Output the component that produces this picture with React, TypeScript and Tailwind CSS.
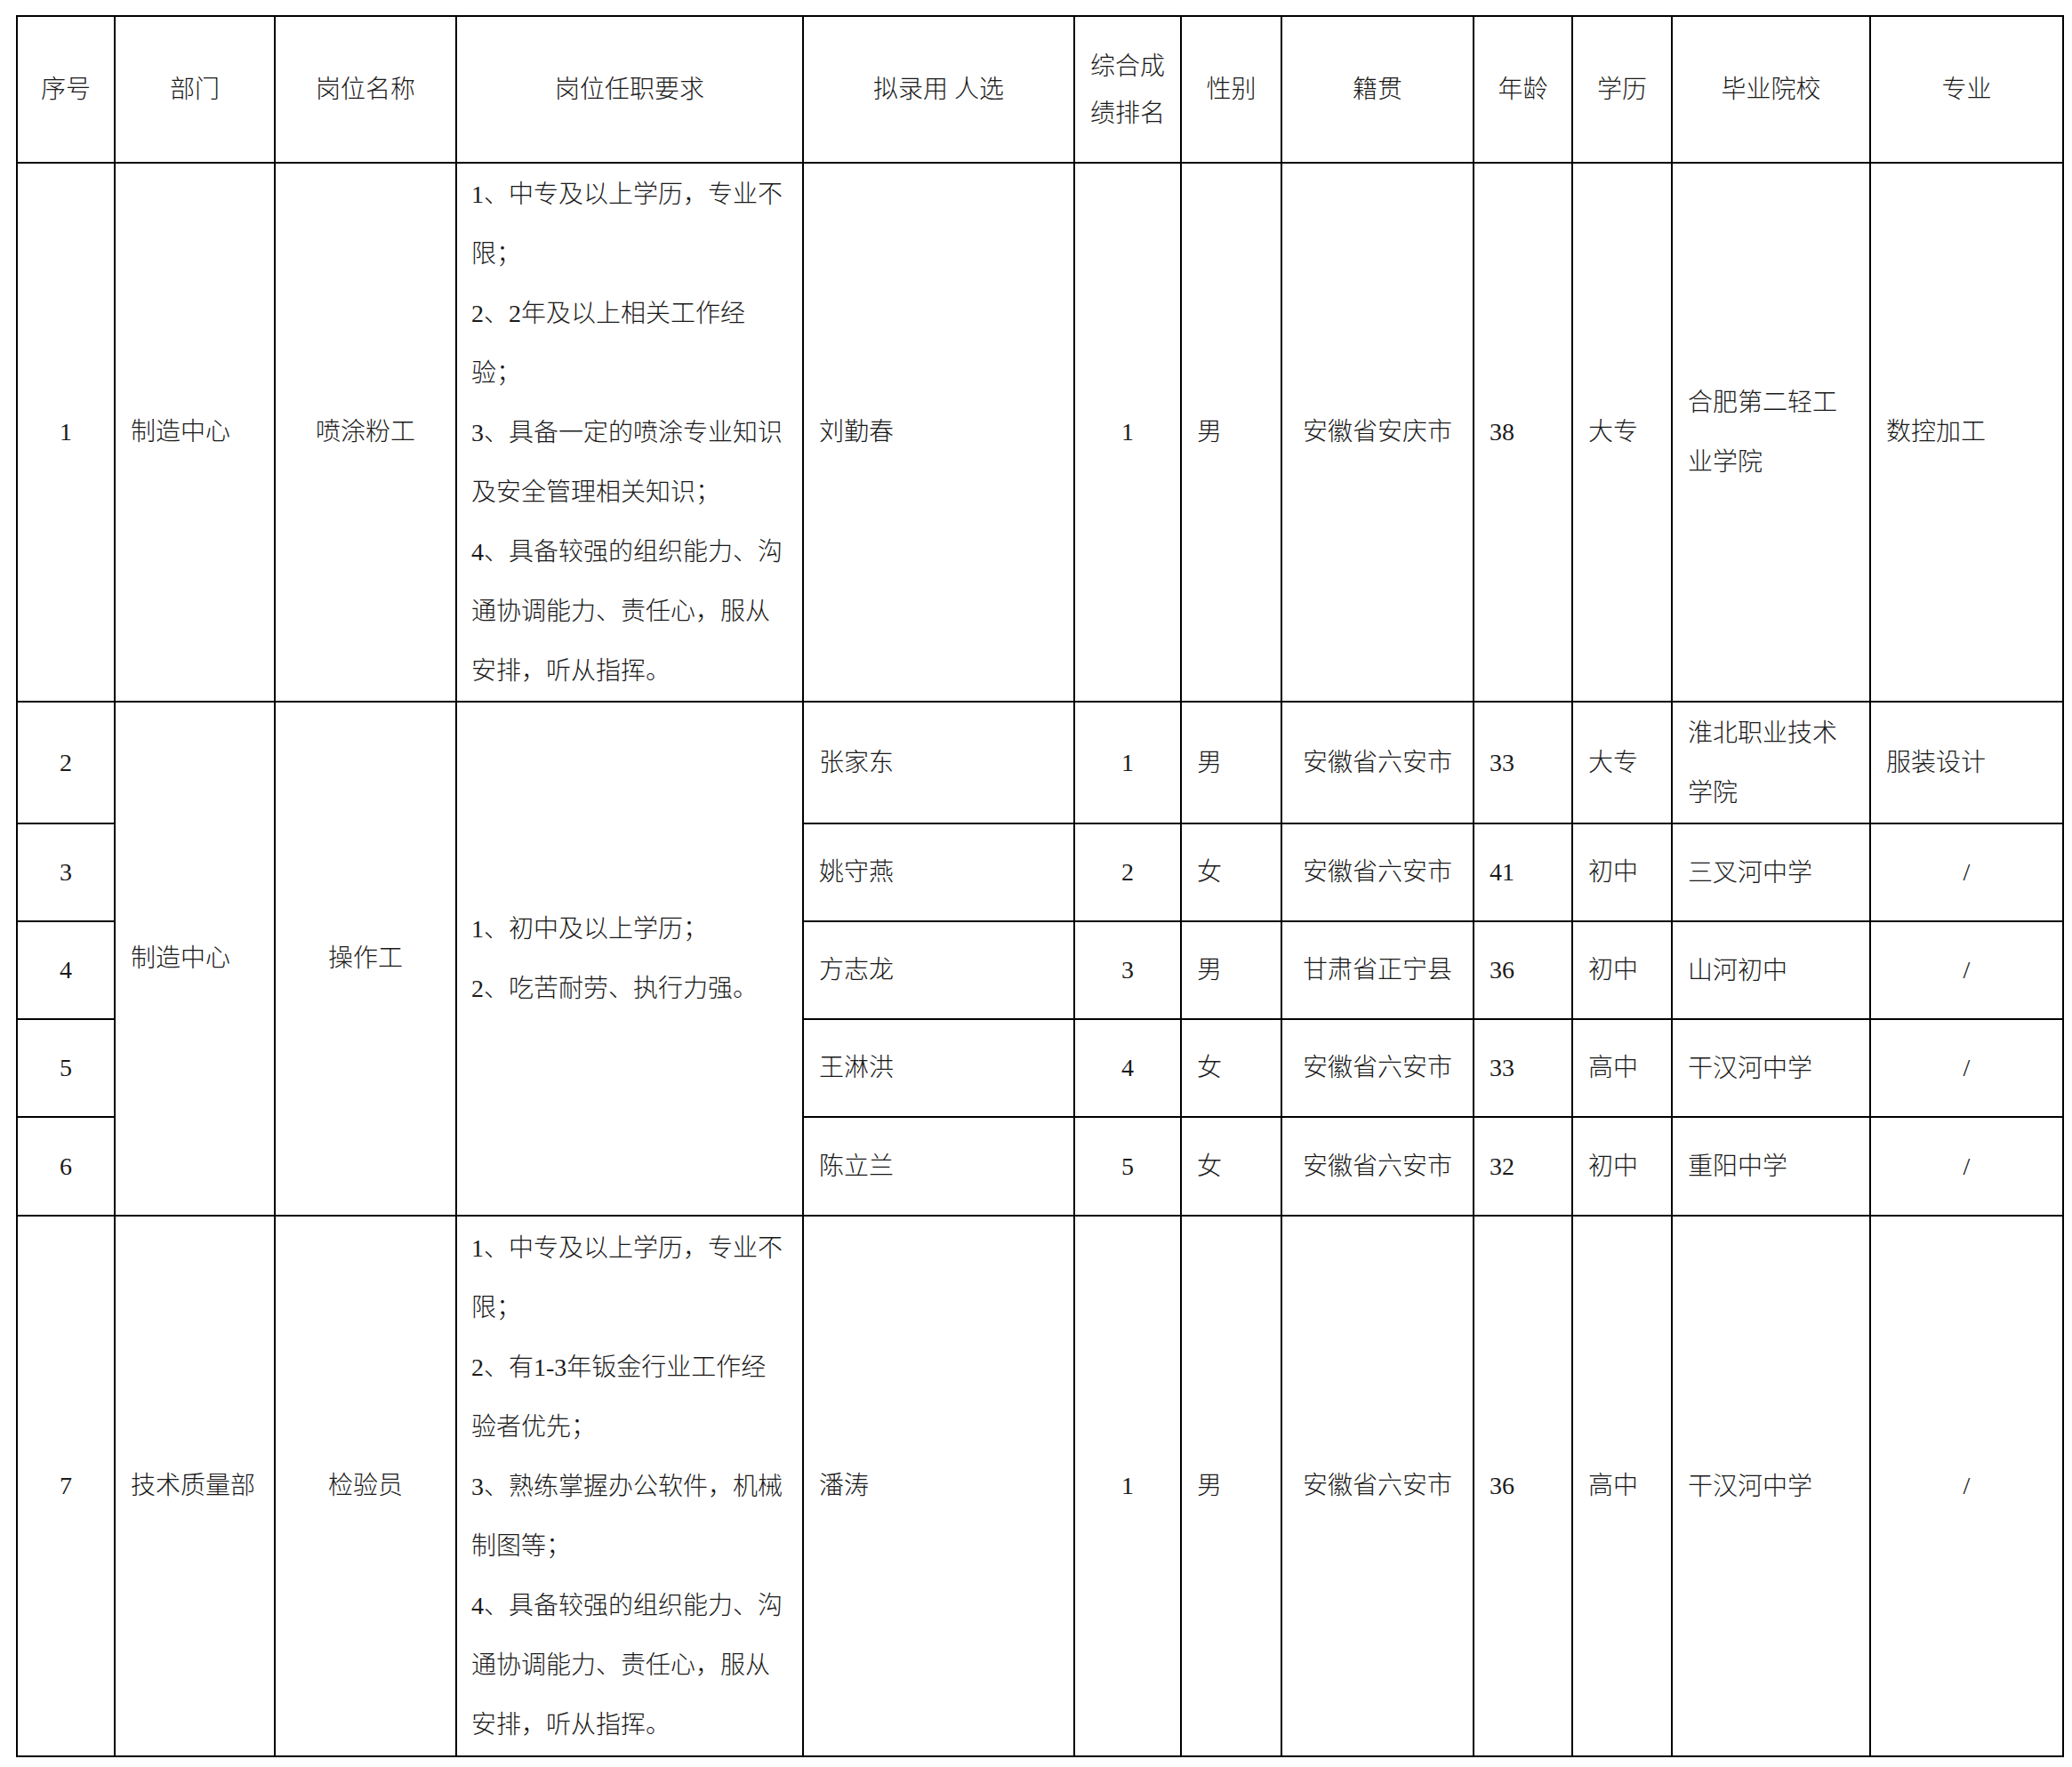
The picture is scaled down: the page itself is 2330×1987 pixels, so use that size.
import React from "react";

type Row = {
  no: string;
  name: string;
  rank: string;
  sex: string;
  origin: string;
  age: string;
  edu: string;
  school: string[];
  major: string;
  h: string;
};

const req1 = [
  "1、中专及以上学历，专业不",
  "限；",
  "2、2年及以上相关工作经",
  "验；",
  "3、具备一定的喷涂专业知识",
  "及安全管理相关知识；",
  "4、具备较强的组织能力、沟",
  "通协调能力、责任心，服从",
  "安排，听从指挥。",
];

const req2 = ["1、初中及以上学历；", "2、吃苦耐劳、执行力强。"];

const req7 = [
  "1、中专及以上学历，专业不",
  "限；",
  "2、有1-3年钣金行业工作经",
  "验者优先；",
  "3、熟练掌握办公软件，机械",
  "制图等；",
  "4、具备较强的组织能力、沟",
  "通协调能力、责任心，服从",
  "安排，听从指挥。",
];

const td = "border-2 border-black align-middle p-0";
const L = `${td} text-left pl-[17px]`;
const C = `${td} text-center`;

function Lines({ lines }: { lines: string[] }) {
  return (
    <div className="leading-[67px] whitespace-nowrap">
      {lines.map((l, i) => (
        <div key={i}>{l}</div>
      ))}
    </div>
  );
}

function Major({ v }: { v: string }) {
  if (v === "/") return <td className={C}>/</td>;
  return <td className={L}>{v}</td>;
}

function Tail({ r }: { r: Row }) {
  return (
    <>
      <td className={L}>{r.name}</td>
      <td className={C}>{r.rank}</td>
      <td className={L}>{r.sex}</td>
      <td className={C}>{r.origin}</td>
      <td className={L}>{r.age}</td>
      <td className={L}>{r.edu}</td>
      <td className={L}>
        <Lines lines={r.school} />
      </td>
      <Major v={r.major} />
    </>
  );
}

export default function App() {
  const r1: Row = { no: "1", name: "刘勤春", rank: "1", sex: "男", origin: "安徽省安庆市", age: "38", edu: "大专", school: ["合肥第二轻工", "业学院"], major: "数控加工", h: "" };
  const group: Row[] = [
    { no: "2", name: "张家东", rank: "1", sex: "男", origin: "安徽省六安市", age: "33", edu: "大专", school: ["淮北职业技术", "学院"], major: "服装设计", h: "h-[137px]" },
    { no: "3", name: "姚守燕", rank: "2", sex: "女", origin: "安徽省六安市", age: "41", edu: "初中", school: ["三叉河中学"], major: "/", h: "h-[110px]" },
    { no: "4", name: "方志龙", rank: "3", sex: "男", origin: "甘肃省正宁县", age: "36", edu: "初中", school: ["山河初中"], major: "/", h: "h-[110px]" },
    { no: "5", name: "王淋洪", rank: "4", sex: "女", origin: "安徽省六安市", age: "33", edu: "高中", school: ["干汉河中学"], major: "/", h: "h-[110px]" },
    { no: "6", name: "陈立兰", rank: "5", sex: "女", origin: "安徽省六安市", age: "32", edu: "初中", school: ["重阳中学"], major: "/", h: "h-[111px]" },
  ];
  const r7: Row = { no: "7", name: "潘涛", rank: "1", sex: "男", origin: "安徽省六安市", age: "36", edu: "高中", school: ["干汉河中学"], major: "/", h: "" };

  return (
    <div className="min-h-[1987px] w-[2330px] bg-white pl-[18px] pt-[17px] text-[#1a1a1a] font-light font-['Liberation_Serif','Noto_Sans_CJK_SC',serif] text-[28px]">
      <table className="border-collapse table-fixed w-[2301px]">
        <colgroup>
          <col className="w-[110px]" />
          <col className="w-[180px]" />
          <col className="w-[204px]" />
          <col className="w-[390px]" />
          <col className="w-[305px]" />
          <col className="w-[120px]" />
          <col className="w-[113px]" />
          <col className="w-[216px]" />
          <col className="w-[111px]" />
          <col className="w-[112px]" />
          <col className="w-[223px]" />
          <col className="w-[217px]" />
        </colgroup>
        <tbody>
          <tr className="h-[165px]">
            <td className={C}>序号</td>
            <td className={C}>部门</td>
            <td className={C}>岗位名称</td>
            <td className={C}>岗位任职要求</td>
            <td className={C}>拟录用&nbsp;人选</td>
            <td className={C}>
              <div className="leading-[53px]">
                <div>综合成</div>
                <div>绩排名</div>
              </div>
            </td>
            <td className={C}>性别</td>
            <td className={C}>籍贯</td>
            <td className={C}>年龄</td>
            <td className={C}>学历</td>
            <td className={C}>毕业院校</td>
            <td className={C}>专业</td>
          </tr>
          <tr className="h-[606px]">
            <td className={C}>{r1.no}</td>
            <td className={L}>制造中心</td>
            <td className={C}>喷涂粉工</td>
            <td className={`${td} text-left pl-[16px]`}>
              <Lines lines={req1} />
            </td>
            <Tail r={r1} />
          </tr>
          {group.map((r, i) => (
            <tr key={r.no} className={r.h}>
              <td className={C}>{r.no}</td>
              {i === 0 && (
                <>
                  <td rowSpan={5} className={L}>制造中心</td>
                  <td rowSpan={5} className={C}>操作工</td>
                  <td rowSpan={5} className={`${td} text-left pl-[16px]`}>
                    <Lines lines={req2} />
                  </td>
                </>
              )}
              <Tail r={r} />
            </tr>
          ))}
          <tr className="h-[608px]">
            <td className={C}>{r7.no}</td>
            <td className={L}>技术质量部</td>
            <td className={C}>检验员</td>
            <td className={`${td} text-left pl-[16px]`}>
              <Lines lines={req7} />
            </td>
            <Tail r={r7} />
          </tr>
        </tbody>
      </table>
    </div>
  );
}
